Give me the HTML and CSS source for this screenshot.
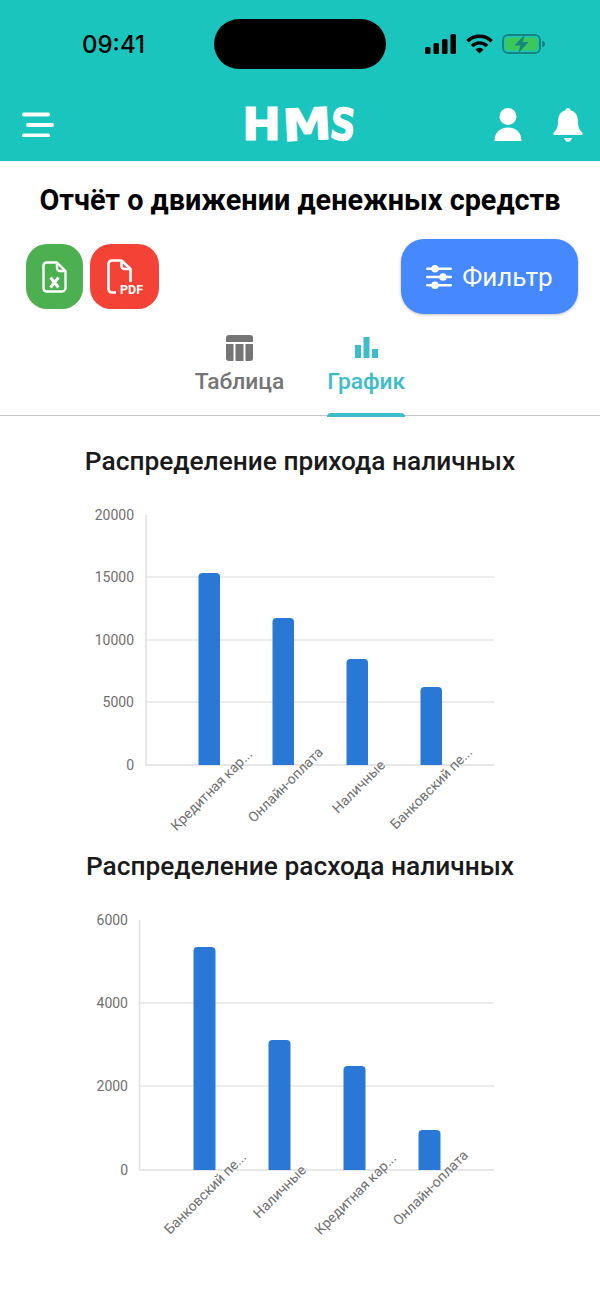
FILE: index.html
```html
<!DOCTYPE html>
<html lang="ru">
<head>
    <meta charset="UTF-8">
    <meta name="viewport" content="width=device-width, initial-scale=1.0">
    <title>Отчёт о движении денежных средств</title>
    <link rel="stylesheet" href="styles.css">
</head>
<body>
    <header class="top">
        <div class="status">
            <span class="time">09:41</span>
            <span class="island"></span>
            <div class="status-icons">
                <svg width="31" height="20" viewBox="0 0 31 20"><rect x="0" y="13" width="5.5" height="7" rx="1.5"/><rect x="8.5" y="9" width="5.5" height="11" rx="1.5"/><rect x="17" y="5" width="5.5" height="15" rx="1.5"/><rect x="25.5" y="0" width="5.5" height="20" rx="1.5"/></svg>
                <svg width="27" height="20" viewBox="0 0 27 20" fill="none" stroke="#000" stroke-width="3.4"><path d="M1.5 7.2a17 17 0 0 1 24 0"/><path d="M6 12a10.6 10.6 0 0 1 15 0"/><path d="M13.5 19.6l-4.1-4.2a5.8 5.8 0 0 1 8.2 0z" fill="#000" stroke="none"/></svg>
                <svg width="43" height="20" viewBox="0 0 43 20"><rect x="1" y="1" width="37" height="18" rx="5" fill="none" stroke="#14857f" stroke-width="2"/><rect x="3.5" y="3.5" width="32" height="13" rx="3" fill="#3cc75a"/><path d="M40 7v6c2 0 3-1.400 3-3s-1-3-3-3z" fill="#14857f"/><path d="M23 0.500L12.500 11.500h6l-2.500 8 10.500-11.500h-6z" fill="#14857f"/></svg>
            </div>
        </div>
        <nav class="nav">
            <svg width="34" height="25" viewBox="0 0 34 25" fill="none" stroke="#fff" stroke-width="4" stroke-linecap="round"><path d="M4 2.500h24M8 13h24M4 23.500h24"/></svg>
            <div class="logo"><span class="l-h">H</span><span class="l-m">M</span><span class="l-s">S</span></div>
            <div class="nav-right">
                <svg width="28" height="33" viewBox="0 0 28 33" fill="#fff"><circle cx="14" cy="8.500" r="8.500"/><path d="M0.500 33c0-8 5-13.500 13.500-13.500S27.500 25 27.500 33z"/></svg>
                <svg width="30" height="34" viewBox="0 0 30 34" fill="#fff"><path d="M15 0c1.300 0 2.200.800 2.400 2.200C22.800 3.600 25 8 25 13.500c0 6 1.500 8.500 4.200 11 .9.900.5 2.500-1 2.500H1.800c-1.500 0-1.900-1.600-1-2.500C3.500 22 5 19.500 5 13.500 5 8 7.200 3.600 12.600 2.200 12.800.800 13.700 0 15 0z"/><path d="M11 30h8c-.5 2.300-2 3.700-4 3.700s-3.500-1.400-4-3.700z"/></svg>
            </div>
        </nav>
    </header>

    <main>
        <h1>Отчёт о движении денежных средств</h1>

        <div class="actions">
            <div class="exports">
                <div class="export excel">
                    <svg width="25" height="32" viewBox="0 0 25 32" fill="none" stroke="#fff" stroke-width="2.400" stroke-linejoin="round"><path d="M4.500 1.500h10.500L23.500 10v17a3.500 3.500 0 0 1-3.500 3.500H4.500A3.500 3.500 0 0 1 1.500 27V5A3.500 3.500 0 0 1 4.500 1.500z"/><path d="M15 1.500V7a3 3 0 0 0 3 3h5.500"/><path d="M8.500 16.500l8 10M16.500 16.500l-8 10" stroke-width="3"/></svg>
                </div>
                <div class="export pdf">
                    <svg width="40" height="36" viewBox="0 0 40 36" fill="none" stroke="#fff" stroke-width="2.600" stroke-linejoin="round"><path d="M9 33.500H5A3.500 3.500 0 0 1 1.500 30V5A3.500 3.500 0 0 1 5 1.500h9.500L23.500 10v13"/><path d="M14.500 1.500V7a3 3 0 0 0 3 3h6"/><text x="13" y="34.500" class="pdf-text">PDF</text></svg>
                </div>
            </div>
            <button class="filter">
                <svg width="26" height="24" viewBox="0 0 26 24" fill="#fff"><rect x="0" y="2.500" width="26" height="2.600" rx="1.300"/><rect x="0" y="10.700" width="26" height="2.600" rx="1.300"/><rect x="0" y="18.900" width="26" height="2.600" rx="1.300"/><circle cx="9" cy="3.800" r="3.800"/><circle cx="17" cy="12" r="3.800"/><circle cx="9" cy="20.200" r="3.800"/></svg>
                Фильтр
            </button>
        </div>

        <div class="tabs">
            <div class="tab">
                <svg width="27" height="26" viewBox="0 0 27 26" fill="#757575"><path d="M3 0h21a3 3 0 0 1 3 3v4H0V3a3 3 0 0 1 3-3z"/><path d="M0 9h7.500v17H3a3 3 0 0 1-3-3z"/><rect x="9.500" y="9" width="8" height="17"/><path d="M19.500 9H27v14a3 3 0 0 1-3 3h-4.500z"/></svg>
                <span>Таблица</span>
            </div>
            <div class="tab active">
                <svg width="23" height="26" viewBox="0 0 23 26" fill="#3dbdc9"><rect x="0" y="10" width="6" height="13"/><rect x="8.500" y="2" width="6" height="21"/><rect x="17" y="14" width="6" height="9"/></svg>
                <span>График</span>
            </div>
        </div>

        <section class="chart-block first">
            <h2>Распределение прихода наличных</h2>
            <svg class="chart" width="600" height="340" viewBox="0 0 600 340">
                <g class="grid">
                    <path d="M146 87H494M146 150H494M146 212H494"/>
                    <path class="axis" d="M146 25V275H494"/>
                </g>
                <g class="y-labels">
                    <text x="134" y="30">20000</text>
                    <text x="134" y="92">15000</text>
                    <text x="134" y="155">10000</text>
                    <text x="134" y="217">5000</text>
                    <text x="134" y="280">0</text>
                </g>
                <path class="bar" d="M198.500 275V87a4 4 0 0 1 4-4H216a4 4 0 0 1 4 4V275z"/>
                <path class="bar" d="M272.500 275V132a4 4 0 0 1 4-4H290a4 4 0 0 1 4 4V275z"/>
                <path class="bar" d="M346.500 275V173a4 4 0 0 1 4-4H364a4 4 0 0 1 4 4V275z"/>
                <path class="bar" d="M420.500 275V201a4 4 0 0 1 4-4H438a4 4 0 0 1 4 4V275z"/>
                <g class="x-labels">
                    <text transform="translate(253 265) rotate(-45)">Кредитная кар...</text>
                    <text transform="translate(324 263) rotate(-45)">Онлайн-оплата</text>
                    <text transform="translate(386 276) rotate(-45)">Наличные</text>
                    <text transform="translate(473 263) rotate(-45)">Банковский пе...</text>
                </g>
            </svg>
        </section>

        <section class="chart-block second">
            <h2>Распределение расхода наличных</h2>
            <svg class="chart" width="600" height="340" viewBox="0 0 600 340">
                <g class="grid">
                    <path d="M139.500 108H494M139.500 191H494"/>
                    <path class="axis" d="M139.500 25V275H494"/>
                </g>
                <g class="y-labels">
                    <text x="128" y="30">6000</text>
                    <text x="128" y="113">4000</text>
                    <text x="128" y="196">2000</text>
                    <text x="128" y="280">0</text>
                </g>
                <path class="bar" d="M193.500 275V56a4 4 0 0 1 4-4H211.500a4 4 0 0 1 4 4V275z"/>
                <path class="bar" d="M268.500 275V149a4 4 0 0 1 4-4H286.500a4 4 0 0 1 4 4V275z"/>
                <path class="bar" d="M343.500 275V175a4 4 0 0 1 4-4H361.500a4 4 0 0 1 4 4V275z"/>
                <path class="bar" d="M418.500 275V239a4 4 0 0 1 4-4H436.500a4 4 0 0 1 4 4V275z"/>
                <g class="x-labels">
                    <text transform="translate(247 263) rotate(-45)">Банковский пе...</text>
                    <text transform="translate(307 276) rotate(-45)">Наличные</text>
                    <text transform="translate(397 264) rotate(-45)">Кредитная кар...</text>
                    <text transform="translate(469 261) rotate(-45)">Онлайн-оплата</text>
                </g>
            </svg>
        </section>
    </main>
</body>
</html>
```

FILE: styles.css
```css
* { box-sizing: border-box; }
html, body { height: 1304px; }
body { margin: 0; background: #fff; font-family: Roboto, "Noto Sans", sans-serif; overflow: hidden; }

.top { background: #19c5bc; height: 161px; }
.status { height: 88px; display: flex; align-items: center; padding-left: 82px; }
.time { width: 65px; font-size: 24px; font-weight: 500; color: #000; font-family: Inter, Roboto, sans-serif; }
.island { width: 172px; height: 50px; border-radius: 25px; background: #000; margin-left: 67px; }
.status-icons { display: flex; align-items: center; gap: 9.500px; margin-left: 39px; }
.nav { display: flex; align-items: center; justify-content: space-between; height: 73px; padding: 0 17px 12px 20px; }
.logo { display: flex; color: #fff; font-family: "DejaVu Sans", sans-serif; font-weight: 700; font-size: 44px; line-height: 44px; -webkit-text-stroke: 1.200px #fff; margin: 12px 0 0 51px; }
.logo span { display: flex; justify-content: center; }
.l-h { width: 33px; margin-right: 5px; transform: scaleX(1.06); }
.l-m { width: 48px; margin-right: 1px; transform: rotate(-3deg) scaleX(1.12); }
.l-s { width: 22px; transform: rotate(6deg) scaleX(0.8); }
.nav-right { display: flex; align-items: center; gap: 31px; padding-top: 12px; }
.nav > svg { margin-top: 12px; }

h1 { margin: 0; padding-top: 21px; font-size: 28.800px; line-height: 36px; font-weight: 700; color: #000; text-align: center; white-space: nowrap; }
.actions { display: flex; justify-content: space-between; align-items: flex-start; padding: 21px 22px 0 26px; }
.exports { display: flex; gap: 7px; margin-top: 5px; }
.export { height: 65px; border-radius: 21px; display: flex; align-items: center; justify-content: center; }
.excel { width: 57px; background: #4caf50; }
.pdf { width: 69px; background: #f44336; padding-left: 4px; }
.pdf-text { font-family: Roboto, sans-serif; font-size: 12.500px; font-weight: 700; fill: #fff; stroke: none; }
.filter { width: 177px; height: 75px; border: none; border-radius: 23px; background: #4688ff; color: #fff; font-family: Roboto, sans-serif; font-size: 26px; display: flex; align-items: center; justify-content: center; gap: 10px; box-shadow: 0 1px 3px rgba(0,0,0,0.25); }

.tabs { display: flex; justify-content: center; gap: 43px; height: 102px; padding-top: 21px; border-bottom: 1.500px solid #c8c8c8; }
.tab { display: flex; flex-direction: column; align-items: center; font-size: 22.800px; font-weight: 500; color: #757575; gap: 9px; position: relative; }
.tab span { line-height: 24px; }
.tab.active { color: #3dbdc9; }
.tab.active::after { content: ""; position: absolute; left: 0; right: 0; bottom: -1.500px; height: 4px; background: #3dbdc9; border-radius: 4px 4px 0 0; }

.chart-block { text-align: center; }
.first { padding-top: 28px; }
.second { padding-top: 19px; }
h2 { margin: 0; font-size: 26.300px; line-height: 34px; font-weight: 500; color: #1a1a1a; white-space: nowrap; }
.chart { display: block; margin-top: 12px; overflow: visible; }
.grid path { fill: none; stroke: #e6e6e8; stroke-width: 1.500; }
.grid .axis { stroke: #e0e0e2; }
.bar { fill: #2a78d6; }
.y-labels text { font-size: 14px; fill: #707070; text-anchor: end; font-family: Roboto, sans-serif; }
.x-labels text { font-size: 14px; fill: #707070; text-anchor: end; font-family: Roboto, sans-serif; }
```
